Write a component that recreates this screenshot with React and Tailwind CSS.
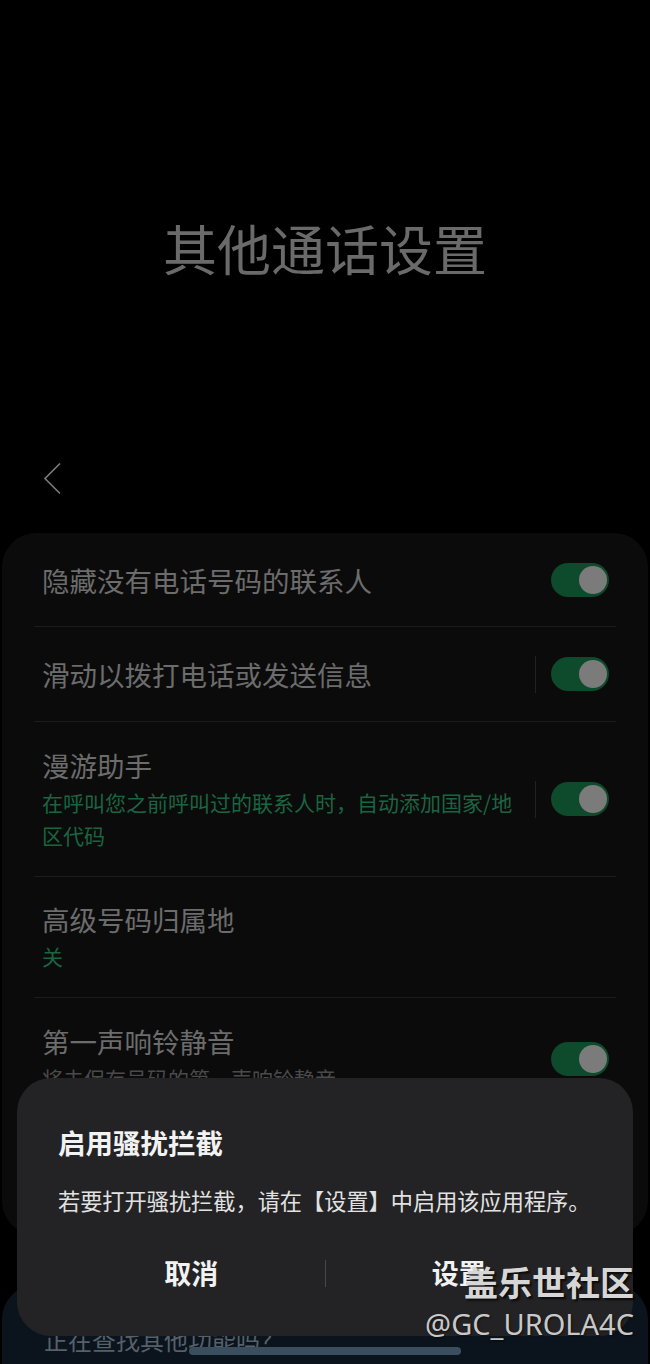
import React from 'react';

const cjk = { fontFamily: '"Noto Sans CJK SC", "Noto Sans", sans-serif' };

const Toggle = () => (
  <div className="flex h-[34px] w-[58px] shrink-0 items-center justify-end rounded-full bg-[#0e4a2c] pr-[2px]">
    <div className="h-[28px] w-[28px] rounded-full bg-[#7b7b7b]" />
  </div>
);

const Row = ({ title, sub, subColor, height, toggle, split, last }) => (
  <div
    className={`flex items-center pl-[8px] pr-[7px] ${height} ${
      last ? '' : 'border-b border-[#1c1c1c]'
    }`}
  >
    <div className="min-w-0 flex-1 pr-[12px]">
      <div className="text-[27.5px] leading-[36px] text-[#6c6c6c]">{title}</div>
      {sub && (
        <div className={`mt-[3px] text-[21px] leading-[33px] ${subColor}`}>{sub}</div>
      )}
    </div>
    {split && <div className="mr-[15px] h-[37px] w-px bg-[#222222]" />}
    {toggle && <Toggle />}
  </div>
);

export default function App() {
  return (
    <div className="relative h-[1364px] w-full overflow-hidden bg-black" style={cjk}>
      {/* header */}
      <div className="flex h-[533px] flex-col">
        <h1 className="pt-[214px] text-center text-[54px] leading-[68px] font-normal text-[#6a6a6a]">
          其他通话设置
        </h1>
        <svg className="ml-[43px] mt-[180px]" width="20" height="34" viewBox="0 0 20 34" fill="none">
          <path d="M17 1.5 L2 16.5 L17 31.5" stroke="#7c7c7c" strokeWidth="1.6" />
        </svg>
      </div>

      {/* settings card */}
      <div className="mx-[2px] rounded-[34px] bg-[#0b0b0b] px-[32px] pb-[116px]">
        <Row title="隐藏没有电话号码的联系人" height="h-[94px]" toggle />
        <Row title="滑动以拨打电话或发送信息" height="h-[95px]" toggle split />
        <Row
          title="漫游助手"
          sub="在呼叫您之前呼叫过的联系人时，自动添加国家/地区代码"
          subColor="text-[#1b6442]"
          height="h-[155px]"
          toggle
          split
        />
        <Row title="高级号码归属地" sub="关" subColor="text-[#1b6442]" height="h-[121px]" />
        <Row
          title="第一声响铃静音"
          sub="将未保存号码的第一声响铃静音"
          subColor="text-[#4a4a4a]"
          height="h-[121px]"
          toggle
          last
        />
      </div>

      {/* next section */}
      <div className="mx-[2px] mt-[50px] h-[200px] rounded-t-[34px] bg-[#0b141c] pl-[42px] pt-[40px]">
        <div className="text-[24px] leading-[30px] text-[#56606a]">正在查找其他功能吗？</div>
      </div>

      {/* dialog */}
      <div className="absolute left-[17px] top-[1078px] h-[258px] w-[616px] rounded-[34px] bg-[#232325] pt-[46px]">
        <div className="px-[41px] text-[27.5px] leading-[36px] font-bold text-[#f2f2f2]">启用骚扰拦截</div>
        <div className="mt-[24px] px-[41px] text-[22.2px] leading-[32px] text-[#e2e2e2]">
          若要打开骚扰拦截，请在【设置】中启用该应用程序。
        </div>
        <div className="mt-[37px] flex items-center px-[41px]">
          <div className="flex-1 text-center text-[27px] leading-[40px] font-bold text-[#f2f2f2]">取消</div>
          <div className="h-[27px] w-px bg-[#48484a]" />
          <div className="flex-1 text-center text-[27px] leading-[40px] font-bold text-[#f2f2f2]">设置</div>
        </div>
      </div>

      {/* watermark */}
      <div className="absolute right-[16px] top-[1260px] flex flex-col items-end">
        <div className="text-[34px] leading-[44px] font-bold text-[#d6d6d6] [text-shadow:2px_2px_2px_rgba(0,0,0,0.7)]">
          盖乐世社区
        </div>
        <div
          className="text-[29px] leading-[40px] text-[#c8c8c8] [text-shadow:1px_1px_2px_rgba(0,0,0,0.6)]"
          style={{ fontFamily: '"Noto Sans", sans-serif' }}
        >
          @GC_UROLA4C
        </div>
      </div>

      {/* home indicator */}
      <div className="absolute left-[189px] top-[1347px] h-[8px] w-[272px] rounded-full bg-[#3b4e5d]" />
    </div>
  );
}
